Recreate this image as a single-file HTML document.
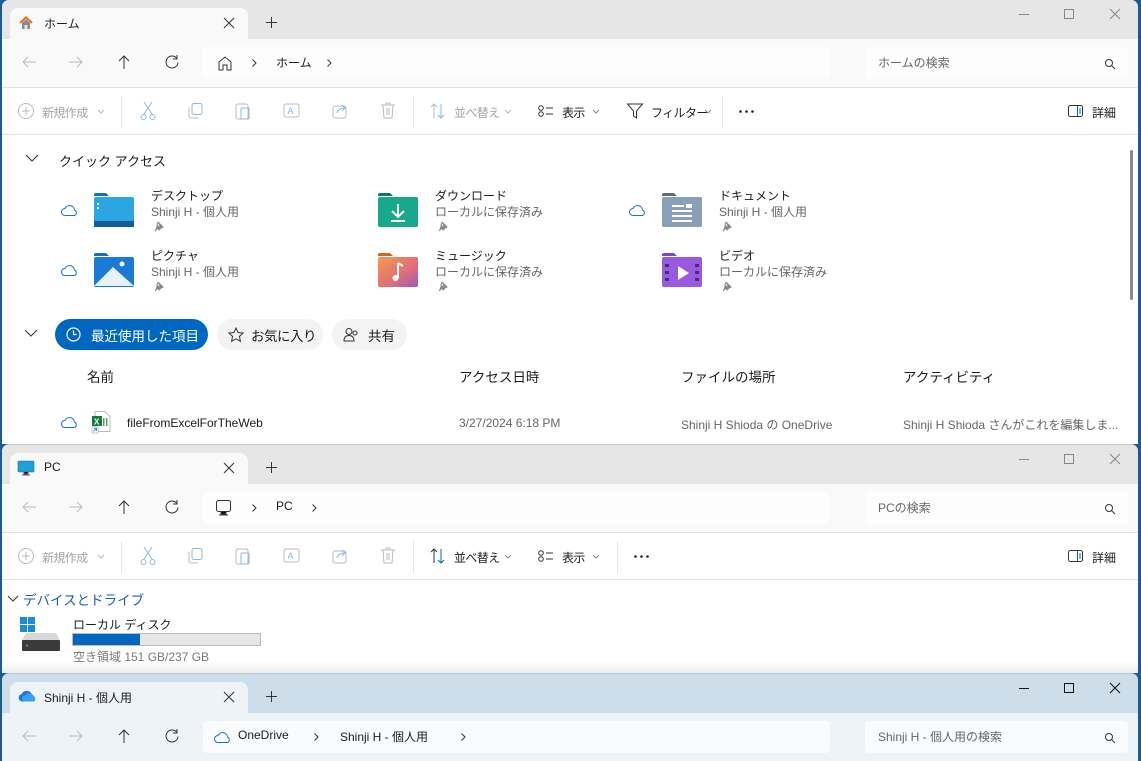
<!DOCTYPE html>
<html><head><meta charset="utf-8">
<style>
*{margin:0;padding:0;box-sizing:border-box}
body{width:1141px;height:761px;overflow:hidden;background:#1b5a92;font-family:"Liberation Sans","Noto Sans CJK JP",sans-serif;font-size:12px;color:#1b1b1b;position:relative}
.a{position:absolute}
.win{position:absolute;left:2px;width:1136px;overflow:hidden;background:#fff;border-radius:7px 7px 0 0}
.tb{position:absolute;left:0;top:0;width:100%;height:39px;background:#e6e6e6}
.tab{position:absolute;left:8px;top:8px;width:238px;height:31px;background:#f9f9f9;border-radius:8px 8px 0 0}
.ar{position:absolute;left:0;top:39px;width:100%;height:49px;background:#f9f9f9;border-bottom:1px solid #e0e0e0}
.box{position:absolute;top:8px;height:32px;background:#fdfdfd;border-radius:4px}
.cb{position:absolute;left:0;top:88px;width:100%;height:47px;background:#fff;border-bottom:1px solid #e3e3e3}
.dis{color:#a3a3a3}
.sep{position:absolute;top:8px;width:1px;height:32px;background:#e5e5e5}
svg{position:absolute;overflow:visible}
.t{position:absolute;white-space:nowrap}
.cbt{letter-spacing:-0.6px}
</style></head><body>

<!-- WINDOW 1 -->
<div class="win" style="top:0;height:444px">
 <div class="tb"></div>
 <div class="tab">
  <svg style="left:8px;top:7px" width="16" height="16" viewBox="0 0 16 16"><path d="M2 8L8 2.5 14 8" fill="none" stroke="#e8741c" stroke-width="2.2"/><path d="M4 8v6h8V8L8 4.5z" fill="#8a8a8a"/><rect x="6.5" y="10" width="3" height="4" fill="#e6e6e6"/></svg>
  <div class="t" style="left:34px;top:7px">ホーム</div>
  <svg style="left:214px;top:10px" width="10" height="10"><path d="M0 0L10 10M10 0L0 10" stroke="#333"/></svg>
 </div>
 <svg style="left:264px;top:17px" width="11" height="11"><path d="M5.5 0v11M0 5.5h11" stroke="#333"/></svg>
 <svg style="left:1017px;top:14px" width="10" height="1"><path d="M0 .5h10" stroke="#888"/></svg>
 <svg style="left:1062px;top:9px" width="10" height="10"><rect x=".5" y=".5" width="9" height="9" fill="none" stroke="#888"/></svg>
 <svg style="left:1108px;top:9px" width="10" height="10"><path d="M0 0L10 10M10 0L0 10" stroke="#888"/></svg>
 <div class="ar">
  <svg style="left:20px;top:17px" width="14" height="12"><path d="M14 6H1M6 1L1 6l5 5" fill="none" stroke="#bbb"/></svg>
  <svg style="left:67px;top:17px" width="14" height="12"><path d="M0 6h13M8 1l5 5-5 5" fill="none" stroke="#bbb"/></svg>
  <svg style="left:116px;top:16px" width="12" height="14"><path d="M6 14V1M1 6l5-5 5 5" fill="none" stroke="#333"/></svg>
  <svg style="left:163px;top:16px" width="14" height="14"><path d="M11.5 3A6 6 0 1 0 13 7.5" fill="none" stroke="#333"/><path d="M12 0v4H8" fill="none" stroke="#333"/></svg>
  <div class="box" style="left:201px;width:627px">
   <svg style="left:14px;top:8px" width="16" height="16"><path d="M2 7L8 2l6 5v8H10v-5H6v5H2z" fill="none" stroke="#333"/></svg>
   <svg style="left:49px;top:12px" width="5" height="8"><path d="M.5 .5l3.5 3.5-3.5 3.5" fill="none" stroke="#333"/></svg>
   <div class="t" style="left:73px;top:7px">ホーム</div>
   <svg style="left:124px;top:12px" width="5" height="8"><path d="M.5 .5l3.5 3.5-3.5 3.5" fill="none" stroke="#333"/></svg>
  </div>
  <div class="box" style="left:863px;width:263px">
   <div class="t" style="left:13px;top:7px;color:#666">ホームの検索</div>
   <svg style="left:240px;top:12px" width="10" height="10"><circle cx="4" cy="4" r="3.5" fill="none" stroke="#333"/><path d="M6.5 6.5L10 10" stroke="#333"/></svg>
  </div>
 </div>
 <div class="cb">
  <svg style="left:16px;top:15px" width="16" height="16"><circle cx="8" cy="8" r="7.5" fill="none" stroke="#bbb"/><path d="M8 4v8M4 8h8" stroke="#bbb"/></svg>
  <div class="t dis cbt" style="left:40px;top:16px">新規作成</div>
  <svg style="left:96px;top:22px" width="6" height="4"><path d="M0 0l3 3 3-3" fill="none" stroke="#bbb"/></svg>
  <div class="sep" style="left:119px"></div>
  <svg style="left:138px;top:14px" width="16" height="18"><path d="M4 0l8 12M12 0L4 12" stroke="#8ab8e0"/><circle cx="3.5" cy="15" r="2.5" fill="none" stroke="#8ab8e0"/><circle cx="12.5" cy="15" r="2.5" fill="none" stroke="#8ab8e0"/></svg>
  <svg style="left:186px;top:15px" width="16" height="16"><rect x="4" y="0.5" width="10" height="11" rx="2" fill="none" stroke="#8ab8e0"/><path d="M1 4v9a2 2 0 0 0 2 2h7" fill="none" stroke="#bbb"/></svg>
  <svg style="left:233px;top:14px" width="16" height="18"><rect x="1" y="2" width="12" height="15" rx="2" fill="none" stroke="#bbb"/><rect x="6" y="6" width="8" height="11" rx="1" fill="none" stroke="#8ab8e0"/></svg>
  <svg style="left:281px;top:15px" width="18" height="16"><rect x="1" y="1" width="15" height="13" rx="2" fill="none" stroke="#bbb"/><text x="4.5" y="11" font-size="9" fill="#8ab8e0" font-family="Liberation Sans">A</text></svg>
  <svg style="left:330px;top:15px" width="16" height="16"><rect x="1" y="3" width="13" height="12" rx="2" fill="none" stroke="#bbb"/><path d="M5 10c1-4 4-5 8-5M10 2l3 3-3 3" fill="none" stroke="#8ab8e0"/></svg>
  <svg style="left:378px;top:14px" width="16" height="18"><path d="M1 3h14M6 3V1h4v2M3 3l1 13h8l1-13M7 6v7M9 6v7" fill="none" stroke="#bbb"/></svg>
  <div class="sep" style="left:411px"></div>
  <svg style="left:428px;top:15px" width="16" height="16"><path d="M4 15V1M1 4l3-3 3 3" fill="none" stroke="#bbb"/><path d="M11 1v14M8 12l3 3 3-3" fill="none" stroke="#8ab8e0"/></svg>
  <div class="t dis cbt" style="left:452px;top:16px">並べ替え</div>
  <svg style="left:503px;top:22px" width="6" height="4"><path d="M0 0l3 3 3-3" fill="none" stroke="#bbb"/></svg>
  <svg style="left:536px;top:17px" width="16" height="12"><circle cx="3" cy="3" r="2.3" fill="none" stroke="#333"/><circle cx="3" cy="9" r="2.3" fill="none" stroke="#333"/><path d="M8 3h7M8 9h7" stroke="#333"/></svg>
  <div class="t cbt" style="left:560px;top:16px">表示</div>
  <svg style="left:591px;top:22px" width="6" height="4"><path d="M0 0l3 3 3-3" fill="none" stroke="#888"/></svg>
  <svg style="left:625px;top:15px" width="16" height="16"><path d="M0.5 1h15l-6 7v7l-3-2V8z" fill="none" stroke="#333"/></svg>
  <div class="t cbt" style="left:649px;top:16px">フィルター</div>
  <svg style="left:703px;top:22px" width="6" height="4"><path d="M0 0l3 3 3-3" fill="none" stroke="#888"/></svg>
  <div class="sep" style="left:720px"></div>
  <svg style="left:737px;top:22px" width="16" height="3"><circle cx="1.5" cy="1.5" r="1.3" fill="#222"/><circle cx="7.5" cy="1.5" r="1.3" fill="#222"/><circle cx="13.5" cy="1.5" r="1.3" fill="#222"/></svg>
  <svg style="left:1066px;top:17px" width="16" height="13"><rect x=".5" y=".5" width="14" height="11" rx="2" fill="none" stroke="#333"/><path d="M9.5 1v10M11 4h2M11 6h2M11 8h2" stroke="#0067c0"/></svg>
  <div class="t" style="left:1090px;top:16px">詳細</div>
 </div>
 <!-- content -->
 <div class="a" style="left:1128px;top:150px;width:3px;height:150px;background:#8a8a8a;border-radius:2px"></div>
 <svg style="left:24px;top:155px" width="12" height="7"><path d="M0 0l6 6 6-6" fill="none" stroke="#333"/></svg>
 <div class="t" style="left:57px;top:151px;font-size:13px">クイック アクセス</div>

 <svg style="left:59px;top:205px" width="17" height="11"><path d="M4 10.5a3.5 3.5 0 0 1 0-7 5 5 0 0 1 9.5 1.5 3 3 0 0 1 0 5.5z" fill="none" stroke="#1a73c8"/></svg>
 <svg style="left:59px;top:265px" width="17" height="11"><path d="M4 10.5a3.5 3.5 0 0 1 0-7 5 5 0 0 1 9.5 1.5 3 3 0 0 1 0 5.5z" fill="none" stroke="#1a73c8"/></svg>
 <svg style="left:627px;top:205px" width="17" height="11"><path d="M4 10.5a3.5 3.5 0 0 1 0-7 5 5 0 0 1 9.5 1.5 3 3 0 0 1 0 5.5z" fill="none" stroke="#1a73c8"/></svg>

 <svg style="left:92px;top:193px" width="40" height="34"><path d="M0 2a2 2 0 0 1 2-2h10l3 3h-15z" fill="#1a6ec0"/><rect x="0" y="4" width="40" height="30" rx="2" fill="#2aa7e0"/><rect x="0" y="28" width="40" height="6" fill="#155a9a"/><rect x="3" y="10" width="2" height="2" fill="#fff"/><rect x="3" y="14" width="2" height="2" fill="#fff"/></svg>
 <svg style="left:92px;top:253px" width="40" height="34"><path d="M0 2a2 2 0 0 1 2-2h10l3 3h-15z" fill="#1a6ec0"/><rect x="0" y="4" width="40" height="30" rx="2" fill="#1a7ad4"/><path d="M0 33L19 14l21 19z" fill="#e8f2fc"/><circle cx="28" cy="11" r="2.5" fill="#fff"/></svg>
 <svg style="left:376px;top:193px" width="40" height="34"><path d="M0 2a2 2 0 0 1 2-2h10l3 3h-15z" fill="#0a7a5a"/><rect x="0" y="4" width="40" height="30" rx="2" fill="#18a88a"/><path d="M20 11v13M14 18l6 6 6-6M13 28h14" fill="none" stroke="#fff" stroke-width="2"/></svg>
 <svg style="left:376px;top:253px" width="40" height="34"><defs><linearGradient id="mg" x1="0" y1="0" x2="1" y2="1"><stop offset="0" stop-color="#f49a50"/><stop offset=".6" stop-color="#e06d78"/><stop offset="1" stop-color="#9a5cc0"/></linearGradient></defs><path d="M0 2a2 2 0 0 1 2-2h10l3 3h-15z" fill="#c86a20"/><rect x="0" y="4" width="40" height="30" rx="2" fill="url(#mg)"/><path d="M20 10v15" stroke="#fff" stroke-width="2"/><circle cx="17.5" cy="25" r="3" fill="#fff"/><path d="M20 10l5 3" stroke="#fff" stroke-width="2"/></svg>
 <svg style="left:660px;top:193px" width="40" height="34"><path d="M0 2a2 2 0 0 1 2-2h10l3 3h-15z" fill="#5a7080"/><rect x="0" y="4" width="40" height="30" rx="2" fill="#8aa0b8"/><path d="M10 13h12M10 18h20M10 23h20M10 28h20" stroke="#fff" stroke-width="2"/><rect x="24" y="11" width="6" height="4" fill="#fff"/></svg>
 <svg style="left:660px;top:253px" width="40" height="34"><path d="M0 2a2 2 0 0 1 2-2h10l3 3h-15z" fill="#7a4ac0"/><rect x="0" y="4" width="40" height="30" rx="2" fill="#9a5ae0"/><path d="M16 13v14l11-7z" fill="#fff"/><g fill="#4a2a80"><rect x="3" y="11" width="4" height="3"/><rect x="3" y="18" width="4" height="3"/><rect x="3" y="25" width="4" height="3"/><rect x="33" y="11" width="4" height="3"/><rect x="33" y="18" width="4" height="3"/><rect x="33" y="25" width="4" height="3"/></g></svg>

 <div class="t" style="left:149px;top:187px">デスクトップ</div>
 <div class="t" style="left:149px;top:203px;color:#666">Shinji H - 個人用</div>
 <div class="t" style="left:149px;top:247px">ピクチャ</div>
 <div class="t" style="left:149px;top:263px;color:#666">Shinji H - 個人用</div>
 <div class="t" style="left:433px;top:187px">ダウンロード</div>
 <div class="t" style="left:433px;top:203px;color:#666">ローカルに保存済み</div>
 <div class="t" style="left:433px;top:247px">ミュージック</div>
 <div class="t" style="left:433px;top:263px;color:#666">ローカルに保存済み</div>
 <div class="t" style="left:717px;top:187px">ドキュメント</div>
 <div class="t" style="left:717px;top:203px;color:#666">Shinji H - 個人用</div>
 <div class="t" style="left:717px;top:247px">ビデオ</div>
 <div class="t" style="left:717px;top:263px;color:#666">ローカルに保存済み</div>
 <svg style="left:152px;top:221px" width="10" height="10"><path d="M4 1l5 5-2 1-2 2-1-2L1 10M4 1L3 4 6 7" fill="#888" stroke="#888"/></svg>
 <svg style="left:152px;top:281px" width="10" height="10"><path d="M4 1l5 5-2 1-2 2-1-2L1 10M4 1L3 4 6 7" fill="#888" stroke="#888"/></svg>
 <svg style="left:436px;top:221px" width="10" height="10"><path d="M4 1l5 5-2 1-2 2-1-2L1 10M4 1L3 4 6 7" fill="#888" stroke="#888"/></svg>
 <svg style="left:436px;top:281px" width="10" height="10"><path d="M4 1l5 5-2 1-2 2-1-2L1 10M4 1L3 4 6 7" fill="#888" stroke="#888"/></svg>
 <svg style="left:720px;top:221px" width="10" height="10"><path d="M4 1l5 5-2 1-2 2-1-2L1 10M4 1L3 4 6 7" fill="#888" stroke="#888"/></svg>
 <svg style="left:720px;top:281px" width="10" height="10"><path d="M4 1l5 5-2 1-2 2-1-2L1 10M4 1L3 4 6 7" fill="#888" stroke="#888"/></svg>

 <svg style="left:23px;top:330px" width="12" height="7"><path d="M0 0l6 6 6-6" fill="none" stroke="#333"/></svg>
 <div class="a" style="left:53px;top:319px;width:153px;height:31px;background:#0067c0;border-radius:16px"></div>
 <svg style="left:64px;top:327px" width="15" height="15"><circle cx="7.5" cy="7.5" r="6.5" fill="none" stroke="#fff" stroke-width="1.2"/><path d="M7.5 3.5v4h3" fill="none" stroke="#fff" stroke-width="1.2"/></svg>
 <div class="t" style="left:89px;top:325px;color:#fff;font-size:13.5px">最近使用した項目</div>
 <div class="a" style="left:215px;top:319px;width:106px;height:31px;background:#f3f3f3;border-radius:16px"></div>
 <svg style="left:226px;top:327px" width="16" height="16"><path d="M8 1l2.1 4.5 4.9.6-3.6 3.3 1 4.9L8 11.8 3.6 14.3l1-4.9L1 6.1l4.9-.6z" fill="none" stroke="#333"/></svg>
 <div class="t" style="left:249px;top:325px;font-size:13.5px;letter-spacing:-0.5px">お気に入り</div>
 <div class="a" style="left:330px;top:319px;width:75px;height:31px;background:#f3f3f3;border-radius:16px"></div>
 <svg style="left:341px;top:327px" width="16" height="16"><circle cx="6" cy="4.5" r="3" fill="none" stroke="#333"/><path d="M1 14c0-4 2-5.5 5-5.5s5 1.5 5 5.5z" fill="none" stroke="#333"/><circle cx="12" cy="6" r="2" fill="none" stroke="#333"/></svg>
 <div class="t" style="left:366px;top:325px;font-size:13.5px">共有</div>

 <div class="t" style="left:85px;top:366px;font-size:13.5px">名前</div>
 <div class="t" style="left:457px;top:366px;font-size:13.5px">アクセス日時</div>
 <div class="t" style="left:679px;top:366px;font-size:13.5px">ファイルの場所</div>
 <div class="t" style="left:901px;top:366px;font-size:13.5px">アクティビティ</div>

 <svg style="left:59px;top:417px" width="17" height="11"><path d="M4 10.5a3.5 3.5 0 0 1 0-7 5 5 0 0 1 9.5 1.5 3 3 0 0 1 0 5.5z" fill="none" stroke="#1a73c8"/></svg>
 <svg style="left:89px;top:411px" width="20" height="22"><path d="M4 .5h10l5 5v15H4z" fill="#fff" stroke="#bbb"/><rect x="12" y="7" width="1.5" height="8" fill="#5aa070"/><rect x="15" y="7" width="1.5" height="8" fill="#5aa070"/><rect x="1" y="5" width="10" height="10" fill="#107c41"/><text x="3" y="13.5" font-size="8" fill="#fff" font-family="Liberation Sans" font-weight="bold">X</text><path d="M1 16h6v6H1z" fill="#fff" stroke="#888" stroke-width=".5"/><path d="M2.5 20.5l3-3M3 17.5h2.5v2.5" fill="none" stroke="#1a73c8" stroke-width=".8"/></svg>
 <div class="t" style="left:125px;top:416px">fileFromExcelForTheWeb</div>
 <div class="t" style="left:457px;top:416px;color:#666">3/27/2024 6:18 PM</div>
 <div class="t" style="left:679px;top:416px;color:#666">Shinji H Shioda の OneDrive</div>
 <div class="t" style="left:901px;top:416px;color:#666">Shinji H Shioda さんがこれを編集しま...</div>
</div>

<!-- WINDOW 2 -->
<div class="win" style="top:444px;height:229px;border-top:1px solid #c8c8c8">
 <div class="tb"></div>
 <div class="tab">
  <svg style="left:8px;top:7px" width="16" height="16"><rect x="0" y="1" width="16" height="11" rx="1" fill="#1fa0d8"/><rect x="0" y="1" width="16" height="11" rx="1" fill="none" stroke="#1a6aa0" stroke-width=".6"/><path d="M6 12v2h4v-2M4 15h8" stroke="#555"/></svg>
  <div class="t" style="left:34px;top:7px">PC</div>
  <svg style="left:214px;top:10px" width="10" height="10"><path d="M0 0L10 10M10 0L0 10" stroke="#333"/></svg>
 </div>
 <svg style="left:264px;top:17px" width="11" height="11"><path d="M5.5 0v11M0 5.5h11" stroke="#333"/></svg>
 <svg style="left:1017px;top:14px" width="10" height="1"><path d="M0 .5h10" stroke="#888"/></svg>
 <svg style="left:1062px;top:9px" width="10" height="10"><rect x=".5" y=".5" width="9" height="9" fill="none" stroke="#888"/></svg>
 <svg style="left:1108px;top:9px" width="10" height="10"><path d="M0 0L10 10M10 0L0 10" stroke="#888"/></svg>
 <div class="ar">
  <svg style="left:20px;top:17px" width="14" height="12"><path d="M14 6H1M6 1L1 6l5 5" fill="none" stroke="#bbb"/></svg>
  <svg style="left:67px;top:17px" width="14" height="12"><path d="M0 6h13M8 1l5 5-5 5" fill="none" stroke="#bbb"/></svg>
  <svg style="left:116px;top:16px" width="12" height="14"><path d="M6 14V1M1 6l5-5 5 5" fill="none" stroke="#333"/></svg>
  <svg style="left:163px;top:16px" width="14" height="14"><path d="M11.5 3A6 6 0 1 0 13 7.5" fill="none" stroke="#333"/><path d="M12 0v4H8" fill="none" stroke="#333"/></svg>
  <div class="box" style="left:201px;width:627px">
   <svg style="left:13px;top:8px" width="16" height="16"><rect x=".5" y=".5" width="14" height="11" rx="2" fill="none" stroke="#333"/><path d="M5 12v2h5v-2M3 15h9" stroke="#333"/></svg>
   <svg style="left:49px;top:12px" width="5" height="8"><path d="M.5 .5l3.5 3.5-3.5 3.5" fill="none" stroke="#333"/></svg>
   <div class="t" style="left:73px;top:7px">PC</div>
   <svg style="left:109px;top:12px" width="5" height="8"><path d="M.5 .5l3.5 3.5-3.5 3.5" fill="none" stroke="#333"/></svg>
  </div>
  <div class="box" style="left:863px;width:263px">
   <div class="t" style="left:13px;top:7px;color:#666">PCの検索</div>
   <svg style="left:240px;top:12px" width="10" height="10"><circle cx="4" cy="4" r="3.5" fill="none" stroke="#333"/><path d="M6.5 6.5L10 10" stroke="#333"/></svg>
  </div>
 </div>
 <div class="cb">
  <svg style="left:16px;top:15px" width="16" height="16"><circle cx="8" cy="8" r="7.5" fill="none" stroke="#bbb"/><path d="M8 4v8M4 8h8" stroke="#bbb"/></svg>
  <div class="t dis cbt" style="left:40px;top:16px">新規作成</div>
  <svg style="left:96px;top:22px" width="6" height="4"><path d="M0 0l3 3 3-3" fill="none" stroke="#bbb"/></svg>
  <div class="sep" style="left:119px"></div>
  <svg style="left:138px;top:14px" width="16" height="18"><path d="M4 0l8 12M12 0L4 12" stroke="#8ab8e0"/><circle cx="3.5" cy="15" r="2.5" fill="none" stroke="#8ab8e0"/><circle cx="12.5" cy="15" r="2.5" fill="none" stroke="#8ab8e0"/></svg>
  <svg style="left:186px;top:15px" width="16" height="16"><rect x="4" y="0.5" width="10" height="11" rx="2" fill="none" stroke="#8ab8e0"/><path d="M1 4v9a2 2 0 0 0 2 2h7" fill="none" stroke="#bbb"/></svg>
  <svg style="left:233px;top:14px" width="16" height="18"><rect x="1" y="2" width="12" height="15" rx="2" fill="none" stroke="#bbb"/><rect x="6" y="6" width="8" height="11" rx="1" fill="none" stroke="#8ab8e0"/></svg>
  <svg style="left:281px;top:15px" width="18" height="16"><rect x="1" y="1" width="15" height="13" rx="2" fill="none" stroke="#bbb"/><text x="4.5" y="11" font-size="9" fill="#8ab8e0" font-family="Liberation Sans">A</text></svg>
  <svg style="left:330px;top:15px" width="16" height="16"><rect x="1" y="3" width="13" height="12" rx="2" fill="none" stroke="#bbb"/><path d="M5 10c1-4 4-5 8-5M10 2l3 3-3 3" fill="none" stroke="#8ab8e0"/></svg>
  <svg style="left:378px;top:14px" width="16" height="18"><path d="M1 3h14M6 3V1h4v2M3 3l1 13h8l1-13M7 6v7M9 6v7" fill="none" stroke="#bbb"/></svg>
  <div class="sep" style="left:411px"></div>
  <svg style="left:428px;top:15px" width="16" height="16"><path d="M4 15V1M1 4l3-3 3 3" fill="none" stroke="#333"/><path d="M11 1v14M8 12l3 3 3-3" fill="none" stroke="#0067c0"/></svg>
  <div class="t cbt" style="left:452px;top:16px">並べ替え</div>
  <svg style="left:503px;top:22px" width="6" height="4"><path d="M0 0l3 3 3-3" fill="none" stroke="#888"/></svg>
  <svg style="left:536px;top:17px" width="16" height="12"><circle cx="3" cy="3" r="2.3" fill="none" stroke="#333"/><circle cx="3" cy="9" r="2.3" fill="none" stroke="#333"/><path d="M8 3h7M8 9h7" stroke="#333"/></svg>
  <div class="t cbt" style="left:560px;top:16px">表示</div>
  <svg style="left:591px;top:22px" width="6" height="4"><path d="M0 0l3 3 3-3" fill="none" stroke="#888"/></svg>
  <div class="sep" style="left:615px"></div>
  <svg style="left:632px;top:22px" width="16" height="3"><circle cx="1.5" cy="1.5" r="1.3" fill="#222"/><circle cx="7.5" cy="1.5" r="1.3" fill="#222"/><circle cx="13.5" cy="1.5" r="1.3" fill="#222"/></svg>
  <svg style="left:1066px;top:17px" width="16" height="13"><rect x=".5" y=".5" width="14" height="11" rx="2" fill="none" stroke="#333"/><path d="M9.5 1v10M11 4h2M11 6h2M11 8h2" stroke="#0067c0"/></svg>
  <div class="t" style="left:1090px;top:16px">詳細</div>
 </div>
 <svg style="left:6px;top:151px" width="10" height="6"><path d="M0 0l5 5 5-5" fill="none" stroke="#333"/></svg>
 <div class="t" style="left:21px;top:144px;font-size:13.5px;color:#1a5fb4">デバイスとドライブ</div>
 <svg style="left:18px;top:172px" width="42" height="35"><rect x="0" y="0" width="7" height="7" fill="#1a8ae0"/><rect x="8" y="0" width="7" height="7" fill="#1a8ae0"/><rect x="0" y="8" width="7" height="7" fill="#1a8ae0"/><rect x="8" y="8" width="7" height="7" fill="#1a8ae0"/><path d="M2 23l4-7h30l4 7z" fill="#d8d8d8"/><rect x="2" y="23" width="38" height="11" rx="1" fill="#3a3a3a"/><circle cx="7" cy="28.5" r="1" fill="#3c3"/></svg>
 <div class="t" style="left:71px;top:171px">ローカル ディスク</div>
 <div class="a" style="left:70px;top:188px;width:189px;height:13px;background:#e6e6e6;border:1px solid #bcbcbc"></div>
 <div class="a" style="left:71px;top:189px;width:67px;height:11px;background:#0067c0"></div>
 <div class="t" style="left:71px;top:203px;color:#777">空き領域 151 GB/237 GB</div>
 <div class="a" style="left:0;top:216px;width:100%;height:13px;background:linear-gradient(rgba(255,255,255,0),#ececec)"></div>
</div>

<!-- WINDOW 3 -->
<div class="win" style="top:673px;height:88px;background:#eef3f8;border-top:1px solid #b8c8d4">
 <div class="tb" style="background:#cddeea"></div>
 <div class="tab" style="background:#eef3f8">
  <svg style="left:8px;top:8px" width="18" height="12"><path d="M4 11.5a3.8 3.8 0 0 1-.3-7.5A5.5 5.5 0 0 1 14 5a3.3 3.3 0 0 1 0 6.5z" fill="#1a7ad8"/><path d="M7 11.5a3 3 0 0 1 0-6 5 5 0 0 1 9 1.5 2.5 2.5 0 0 1 0 4.5z" fill="#3aa0f0"/></svg>
  <div class="t" style="left:34px;top:7px">Shinji H - 個人用</div>
  <svg style="left:214px;top:10px" width="10" height="10"><path d="M0 0L10 10M10 0L0 10" stroke="#333"/></svg>
 </div>
 <svg style="left:264px;top:17px" width="11" height="11"><path d="M5.5 0v11M0 5.5h11" stroke="#333"/></svg>
 <svg style="left:1017px;top:14px" width="10" height="1"><path d="M0 .5h10" stroke="#111"/></svg>
 <svg style="left:1062px;top:9px" width="10" height="10"><rect x=".5" y=".5" width="9" height="9" fill="none" stroke="#111"/></svg>
 <svg style="left:1108px;top:9px" width="10" height="10"><path d="M0 0L10 10M10 0L0 10" stroke="#111"/></svg>
 <div class="ar" style="background:#eef3f8;border:none">
  <svg style="left:20px;top:17px" width="14" height="12"><path d="M14 6H1M6 1L1 6l5 5" fill="none" stroke="#bbb"/></svg>
  <svg style="left:67px;top:17px" width="14" height="12"><path d="M0 6h13M8 1l5 5-5 5" fill="none" stroke="#bbb"/></svg>
  <svg style="left:116px;top:16px" width="12" height="14"><path d="M6 14V1M1 6l5-5 5 5" fill="none" stroke="#333"/></svg>
  <svg style="left:163px;top:16px" width="14" height="14"><path d="M11.5 3A6 6 0 1 0 13 7.5" fill="none" stroke="#333"/><path d="M12 0v4H8" fill="none" stroke="#333"/></svg>
  <div class="box" style="left:201px;width:627px;background:#f9fbfd">
   <svg style="left:11px;top:11px" width="16" height="11"><path d="M4 10.5a3.5 3.5 0 0 1 0-7 5 5 0 0 1 9.5 1.5 3 3 0 0 1 0 5.5z" fill="none" stroke="#1a73c8"/></svg>
   <div class="t" style="left:35px;top:7px">OneDrive</div>
   <svg style="left:111px;top:12px" width="5" height="8"><path d="M.5 .5l3.5 3.5-3.5 3.5" fill="none" stroke="#333"/></svg>
   <div class="t" style="left:137px;top:7px">Shinji H - 個人用</div>
   <svg style="left:258px;top:12px" width="5" height="8"><path d="M.5 .5l3.5 3.5-3.5 3.5" fill="none" stroke="#333"/></svg>
  </div>
  <div class="box" style="left:863px;width:263px;background:#f9fbfd">
   <div class="t" style="left:13px;top:7px;color:#666">Shinji H - 個人用の検索</div>
   <svg style="left:240px;top:12px" width="10" height="10"><circle cx="4" cy="4" r="3.5" fill="none" stroke="#333"/><path d="M6.5 6.5L10 10" stroke="#333"/></svg>
  </div>
 </div>
</div>
</body></html>
